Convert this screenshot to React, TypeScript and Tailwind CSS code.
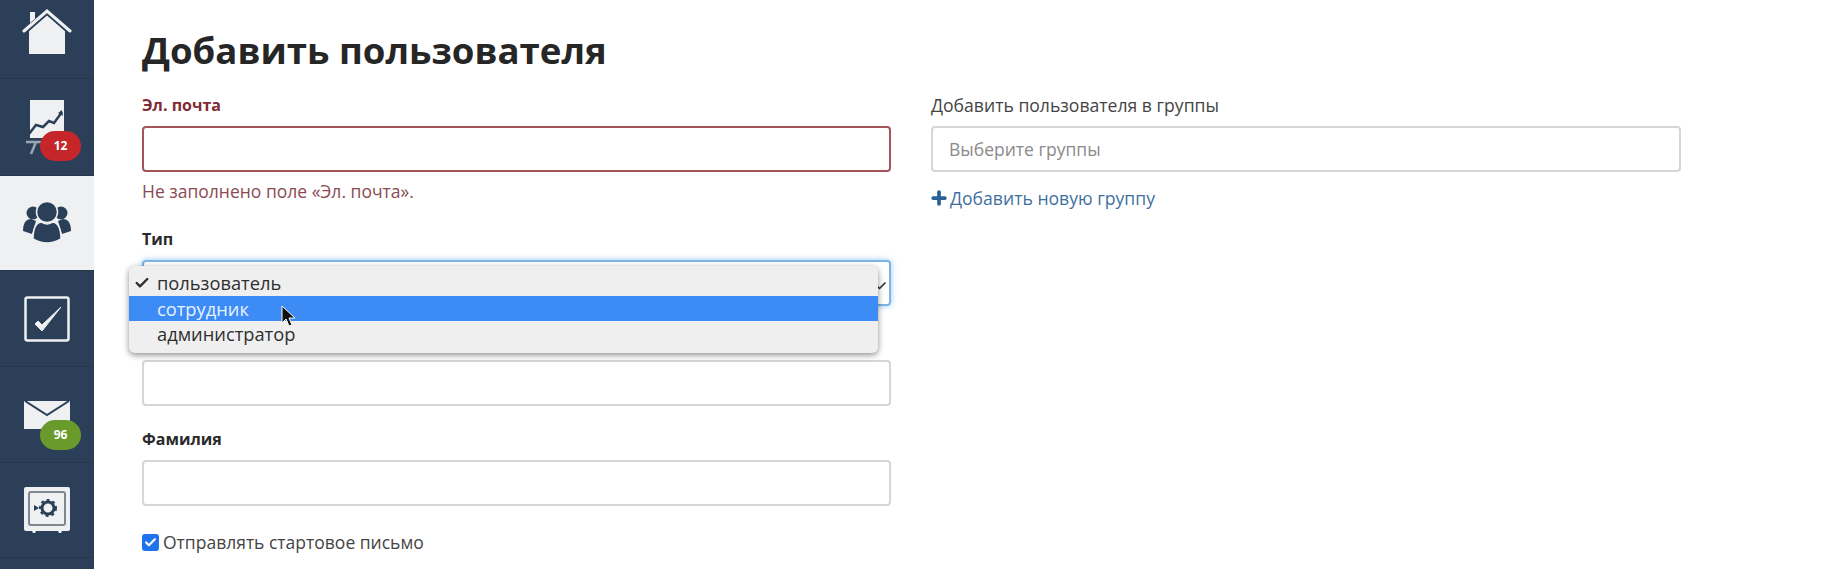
import { ReactNode } from "react";
import { Check, Plus } from "lucide-react";

const FONT = "font-['Open_Sans',sans-serif]";
const INPUT = "h-[46px] w-full rounded-[4px] border-2 border-[#d6d6d6] bg-white";
const LABEL = "text-[16px] leading-[20px] font-bold text-[#2a2a2a]";

function HomeIcon() {
  return (
    <svg width="50" height="46" viewBox="0 0 50 46">
      <path d="M7 22 L25 6 L43 22 V45 H7 Z" fill="#eef0f2" />
      <path d="M8 3 H13 V10 L8 14 Z" fill="#eef0f2" />
      <path d="M2 23 L25 3 L48 23" fill="none" stroke="#2b4058" strokeWidth="5" />
      <path d="M2 22 L25 2 L48 22" fill="none" stroke="#eef0f2" strokeWidth="3" strokeLinecap="round" />
    </svg>
  );
}

function ChartIcon() {
  return (
    <svg width="44" height="56" viewBox="0 0 44 56">
      <rect x="6" y="0" width="34" height="38" fill="#eef0f2" />
      <path d="M1 39 L12 25 L19 27 L25 21 L30 23 L38 12" fill="none" stroke="#2b4058" strokeWidth="2.5" />
      <path d="M38 10 L39 16 L34 13 Z" fill="#2b4058" />
      <path d="M2 42 H24 M12 42 L7 54" fill="none" stroke="#9aa6b2" strokeWidth="2.5" />
    </svg>
  );
}

function UsersIcon() {
  return (
    <svg width="50" height="44" viewBox="0 0 50 44" fill="#2b4058">
      <circle cx="11" cy="12" r="6.5" />
      <circle cx="39" cy="12" r="6.5" />
      <path d="M1 30 C1 22 4 18 9 18 L14 20 L10 33 Z" />
      <path d="M49 30 C49 22 46 18 41 18 L36 20 L40 33 Z" />
      <circle cx="25" cy="11" r="10.5" stroke="#eef0f2" strokeWidth="1.5" />
      <path d="M11 38 C11 28 14 22 19 21 Q25 25 31 21 C36 22 39 28 39 38 Q25 46 11 38 Z" stroke="#eef0f2" strokeWidth="1.5" />
    </svg>
  );
}

function TaskIcon() {
  return (
    <svg width="46" height="46" viewBox="0 0 46 46" fill="none">
      <rect x="1.5" y="1.5" width="43" height="43" rx="2" stroke="#eef0f2" strokeWidth="2.5" />
      <path d="M11 28 L18 35 L37 11 L18 29 L14 25 Z" fill="#eef0f2" stroke="#eef0f2" strokeWidth="1" strokeLinejoin="round" />
    </svg>
  );
}

function MailIcon() {
  return (
    <svg width="46" height="30" viewBox="0 0 46 30">
      <rect x="0" y="0" width="46" height="28" fill="#eef0f2" />
      <path d="M1 0 L23 14 L45 0" fill="none" stroke="#2b4058" strokeWidth="2" />
    </svg>
  );
}

function SafeIcon() {
  return (
    <svg width="46" height="46" viewBox="0 0 46 46">
      <path d="M2 0 H44 A2 2 0 0 1 46 2 V42 A2 2 0 0 1 44 44 H38 L37 46 H35 L34 44 H12 L11 46 H9 L8 44 H2 A2 2 0 0 1 0 42 V2 A2 2 0 0 1 2 0 Z" fill="#eef0f2" />
      <rect x="5" y="5" width="36" height="33" rx="2" fill="none" stroke="#7d8790" strokeWidth="2" />
      <circle cx="24" cy="21" r="6" fill="none" stroke="#2b4058" strokeWidth="3" />
      <circle cx="24" cy="21" r="8" fill="none" stroke="#2b4058" strokeWidth="2" strokeDasharray="3 3" />
      <path d="M10 18 L15 21 L10 24 Z" fill="#2b4058" />
    </svg>
  );
}

function Badge({ color, children }: { color: string; children: ReactNode }) {
  return (
    <span
      className={`absolute left-[40px] flex h-[30px] w-[41px] items-center justify-center rounded-full text-[12px] font-bold text-white ${color}`}
    >
      {children}
    </span>
  );
}

function NavItem({
  height,
  active,
  children,
}: {
  height: string;
  active?: boolean;
  children: ReactNode;
}) {
  return (
    <div
      className={`relative flex w-full items-center justify-center border-b border-[#25384d] ${height} ${
        active ? "bg-[#eef0f2]" : ""
      }`}
    >
      {children}
    </div>
  );
}

function Sidebar() {
  return (
    <aside className="flex h-full w-[94px] shrink-0 flex-col overflow-hidden bg-[#2b4058]">
      <div className="relative flex h-[79px] shrink-0 items-start justify-center border-b border-[#25384d] pt-[9px]">
        <HomeIcon />
      </div>
      <div className="relative h-[97px] shrink-0 border-b border-[#25384d] pl-[24px] pt-[21px]">
        <ChartIcon />
        <Badge color="bg-[#c4262a] top-[52px]">12</Badge>
      </div>
      <NavItem height="h-[95px] shrink-0" active>
        <UsersIcon />
      </NavItem>
      <NavItem height="h-[96px] shrink-0">
        <TaskIcon />
      </NavItem>
      <div className="relative h-[96px] shrink-0 border-b border-[#25384d] pl-[24px] pt-[34px]">
        <MailIcon />
        <Badge color="bg-[#6b9a2c] top-[53px]">96</Badge>
      </div>
      <NavItem height="h-[95px] shrink-0">
        <SafeIcon />
      </NavItem>
    </aside>
  );
}

function TypeMenu() {
  return (
    <div className="absolute left-[-15px] top-[4px] z-10 h-[87px] w-[749px] rounded-[6px] bg-[#efefef] py-[4px] text-[18.3px] leading-[25px] text-[#2e2e2e] shadow-[0_2px_6px_rgba(0,0,0,0.45)]">
      <div className="relative h-[26px] pl-[28px]">
        <Check className="absolute left-[5px] top-[5px] h-[16px] w-[16px]" strokeWidth={3.5} />
        пользователь
      </div>
      <div className="bg-[#3d8bf5] pl-[28px] text-[#e8f2ff]">сотрудник</div>
      <div className="pl-[28px]">администратор</div>
    </div>
  );
}

function Cursor() {
  return (
    <svg className="absolute left-[137px] top-[43px] z-20" width="16" height="24" viewBox="0 0 16 24">
      <path d="M1 1 V18 L5 14 L8 21 L11 20 L8 13 H14 Z" fill="#111" stroke="#fff" strokeWidth="1" />
    </svg>
  );
}

export default function App() {
  return (
    <div className={`flex h-[569px] w-full overflow-hidden bg-white ${FONT}`}>
      <Sidebar />
      <main className="min-w-0 flex-1 pl-[48px]">
        <h1 className="mt-[26px] h-[48px] text-[36.6px] leading-[48px] font-bold text-[#262626]">
          Добавить пользователя
        </h1>
        <div className="mt-[21px] flex gap-[40px]">
          {/* левая колонка */}
          <div className="w-[749px] shrink-0">
            <div className={`${LABEL} text-[#7f2b33]`}>Эл. почта</div>
            <div className="mt-[11px] h-[46px] w-full rounded-[4px] border-2 border-[#a5545c] bg-white" />
            <p className="mt-[8px] text-[17.5px] leading-[22px] text-[#8b4a52]">
              Не заполнено поле «Эл. почта».
            </p>
            <div className={`${LABEL} mt-[27px]`}>Тип</div>
            <div className="relative mt-[11px] h-[46px] w-full rounded-[4px] border-2 border-[#7db4e6] bg-white shadow-[0_0_6px_rgba(90,160,240,0.6)]">
              <TypeMenu />
              <Cursor />
              <Check className="absolute right-[2px] top-[18px] h-[12px] w-[12px] text-[#333]" strokeWidth={3.5} />
            </div>
            {/* подпись «Имя» скрыта под открытым списком */}
            <div className={`${INPUT} mt-[54px]`} />
            <div className={`${LABEL} mt-[23px]`}>Фамилия</div>
            <div className={`${INPUT} mt-[11px]`} />
            <label className="mt-[25px] flex items-center gap-[4px] text-[17.5px] leading-[22px] text-[#444]">
              <span className="flex h-[17px] w-[17px] items-center justify-center rounded-[3px] bg-[#1f74ec]">
                <Check className="h-[13px] w-[13px] text-white" strokeWidth={4} />
              </span>
              Отправлять стартовое письмо
            </label>
          </div>

          {/* правая колонка */}
          <div className="w-[750px] shrink-0">
            <div className="text-[17.6px] leading-[20px] text-[#444]">Добавить пользователя в группы</div>
            <div className={`${INPUT} mt-[11px] flex items-center px-[16px] text-[17.5px] text-[#8a8a8a]`}>
              Выберите группы
            </div>
            <a className="mt-[15px] flex items-center gap-[1px] text-[17.6px] leading-[22px] text-[#3f6f9f]">
              <Plus className="ml-[-2px] h-[20px] w-[20px] text-[#2a6098]" strokeWidth={4.5} />
              Добавить новую группу
            </a>
          </div>
        </div>
      </main>
    </div>
  );
}
